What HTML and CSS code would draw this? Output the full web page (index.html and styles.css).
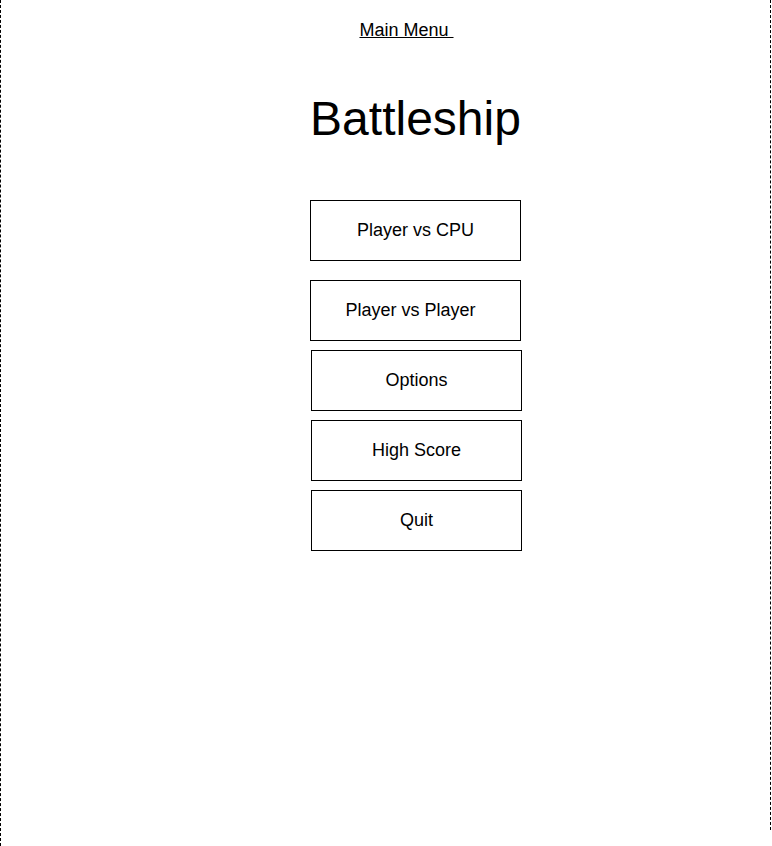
FILE: index.html
```html
<!DOCTYPE html>
<html>
<head>
<meta charset="utf-8">
<link rel="stylesheet" href="styles.css">
</head>
<body>
<div class="frame">
  <div class="page">
    <a class="menu-link" href="#">Main Menu&nbsp;</a>
    <h1 class="title">Battleship</h1>
    <div class="buttons">
      <div class="btn btn-a">Player vs CPU</div>
      <div class="btn btn-b">Player vs Player</div>
      <div class="btn btn-c">Options</div>
      <div class="btn btn-c">High Score</div>
      <div class="btn btn-c">Quit</div>
    </div>
  </div>
</div>
</body>
</html>
```
FILE: styles.css
```css
html, body {
  margin: 0;
  padding: 0;
  background: #fff;
}
body {
  font-family: "Liberation Sans", Arial, Helvetica, sans-serif;
  color: #000;
}
.frame {
  width: 771px;
  height: 846px;
  box-sizing: border-box;
  border-left: 1px dashed #000;
}
.page {
  width: 770px;
  height: 830px;
  box-sizing: border-box;
  border-right: 1px dashed #000;
  padding-left: 60px;
  padding-top: 20px;
  display: flex;
  flex-direction: column;
  align-items: center;
}
.menu-link {
  font-size: 18px;
  line-height: 21px;
  color: #000;
  text-decoration: underline;
  margin-right: 18px;
}
.title {
  font-size: 48px;
  font-weight: normal;
  line-height: 56px;
  margin: 50px 0 0 0;
}
.buttons {
  align-self: flex-start;
  margin-top: 53px;
  margin-left: 249px;
  display: flex;
  flex-direction: column;
  gap: 9px;
}
.btn {
  width: 211px;
  height: 61px;
  box-sizing: border-box;
  border: 1px solid #000;
  font-size: 18px;
  display: flex;
  align-items: center;
  justify-content: center;
}
.btn-a {
  margin-bottom: 10px;
}
.btn-b {
  padding-right: 10px;
}
.btn-c {
  margin-left: 1px;
}
```
